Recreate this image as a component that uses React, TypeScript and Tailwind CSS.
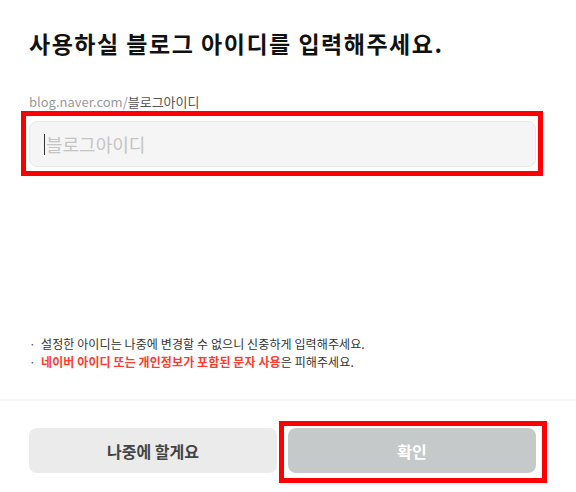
import React from 'react';

export default function App() {
  return (
    <div className="w-full h-[492px] bg-white flex flex-col font-['Noto_Sans_CJK_KR','Noto_Sans',sans-serif] overflow-hidden">
      {/* 제목 */}
      <h1 className="mt-[27px] ml-[29px] text-[23px] font-bold leading-[32px] tracking-[1.5px] text-[#111]">
        사용하실 블로그 아이디를 입력해주세요.
      </h1>

      <div className="mt-[34px] ml-[29px] text-[13px] leading-[18px]">
        <span className="text-[#999]">blog.naver.com/</span>
        <span className="text-[#555]">블로그아이디</span>
      </div>

      {/* 입력창 */}
      <div className="relative mt-[10px] ml-[29px] w-[507px]">
        <div className="h-[46px] rounded-[8px] border border-[#e8e8e8] bg-[#f5f5f5] flex items-center pl-[14px]">
          <span className="w-px h-[21px] bg-[#333]" />
          <span className="ml-px text-[18px] text-[#c4c4c4]">블로그아이디</span>
        </div>
        <div className="absolute -left-[8px] -top-[10px] -right-[7px] -bottom-[9px] border-[5px] border-[#ff0000] pointer-events-none" />
      </div>

      <div className="flex-1" />

      {/* 안내 문구 */}
      <ul className="ml-[29px] mb-[28px] text-[12px] leading-[18px] tracking-[0.1px]">
        <li className="flex">
          <span className="w-[12px] text-[#555]">·</span>
          <span className="text-[#333]">설정한 아이디는 나중에 변경할 수 없으니 신중하게 입력해주세요.</span>
        </li>
        <li className="flex">
          <span className="w-[12px] text-[#555]">·</span>
          <span className="text-[#333]">
            <span className="text-[#ff3b2f] font-semibold">네이버 아이디 또는 개인정보가 포함된 문자 사용</span>은 피해주세요.
          </span>
        </li>
      </ul>

      <div className="h-[2px] bg-[#f6f6f6]" />

      {/* 버튼 */}
      <div className="flex gap-[11px] pl-[29px] pr-[40px] pt-[27px] pb-[19px]">
        <button className="flex-1 h-[45px] rounded-[8px] bg-[#ebebeb] text-[16px] font-bold text-[#444]">
          나중에 할게요
        </button>
        <div className="relative flex-1">
          <button className="w-full h-[45px] rounded-[8px] bg-[#c6c9ca] text-[16px] font-bold text-white">
            확인
          </button>
          <div className="absolute -left-[9px] -top-[7px] -right-[11px] -bottom-[10px] border-[5px] border-[#ff0000] pointer-events-none" />
        </div>
      </div>
    </div>
  );
}
